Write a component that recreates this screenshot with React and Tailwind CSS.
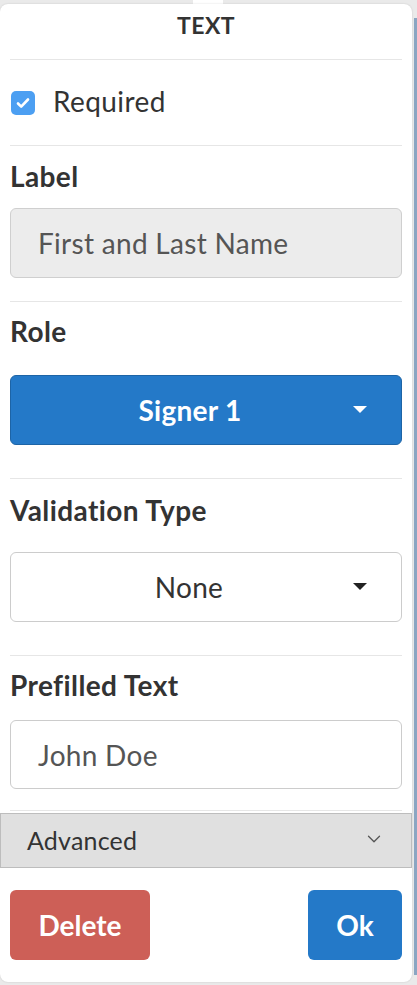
import { ChevronDown } from "lucide-react";

/* ── Section heading ── */
const Heading = ({ children }) => (
  <p className="text-[28px] font-bold text-[#333] leading-none tracking-[0.4px]">{children}</p>
);

const Rule = () => <div className="h-px shrink-0 bg-[#e6e6e6] mx-[10px]" />;

/* ── Caret for the select buttons ── */
const Caret = ({ color }) => (
  <svg width="14" height="8" viewBox="0 0 14 8" className="absolute right-[34px] top-1/2 -translate-y-1/2">
    <path d="M0 0h14L7 7z" fill={color} />
  </svg>
);

export default function App() {
  return (
    <div className="relative min-h-[985px] w-[417px] bg-[#eaeaea] pt-[4px] font-['Lato','Noto_Sans',sans-serif]">
      {/* popover arrow notch */}
      <div className="absolute left-[193px] top-0 h-[5px] w-[30px] bg-white" />
      {/* neighbouring column at the right edge */}
      <div className="absolute right-0 top-[18px] bottom-[10px] w-[3px] bg-[#8ba6c2]" />

      <div className="relative flex h-[978px] w-[412px] flex-col rounded-[8px] bg-white shadow-[0_0_2px_rgba(0,0,0,0.15)]">
        {/* ── Header ── */}
        <div className="flex h-[55px] shrink-0 justify-center pt-[10px]">
          <span className="text-[23px] font-bold text-[#333] leading-none tracking-[0.4px]">TEXT</span>
        </div>
        <Rule />

        {/* ── Required ── */}
        <div className="flex h-[85px] shrink-0 items-center gap-[18px] px-[11px]">
          <span className="flex h-[24px] w-[24px] items-center justify-center rounded-[5px] bg-[#4c9ff2]">
            <svg width="14" height="12" viewBox="0 0 14 12">
              <path d="M2 6.5l3.2 3.2L12 2.5" stroke="white" strokeWidth="2.6" fill="none" strokeLinecap="round" strokeLinejoin="round" />
            </svg>
          </span>
          <span className="-mt-[3px] text-[28px] text-[#333] leading-none tracking-[0.4px]">Required</span>
        </div>
        <Rule />

        {/* ── Label ── */}
        <div className="flex shrink-0 flex-col px-[10px] pt-[16px] pb-[23px]">
          <Heading>Label</Heading>
          <div className="mt-[18px] flex h-[70px] items-center rounded-[6px] border border-[#cfcfcf] bg-[#ececec] px-[27px]">
            <span className="text-[28px] text-[#555] tracking-[0.3px]">First and Last Name</span>
          </div>
        </div>
        <Rule />

        {/* ── Role ── */}
        <div className="flex shrink-0 flex-col px-[10px] pt-[15px] pb-[33px]">
          <Heading>Role</Heading>
          <div className="relative mt-[30px] flex h-[70px] items-center justify-center rounded-[6px] border border-[#1d64a6] bg-[#2479c8]">
            <span className="mr-[32px] text-[28px] font-bold text-white tracking-[0.3px]">Signer 1</span>
            <Caret color="white" />
          </div>
        </div>
        <Rule />

        {/* ── Validation Type ── */}
        <div className="flex shrink-0 flex-col px-[10px] pt-[17px] pb-[33px]">
          <Heading>Validation Type</Heading>
          <div className="relative mt-[28px] flex h-[70px] items-center justify-center rounded-[6px] border border-[#cccccc] bg-white">
            <span className="mr-[34px] text-[28px] text-[#333] tracking-[0.3px]">None</span>
            <Caret color="#222" />
          </div>
        </div>
        <Rule />

        {/* ── Prefilled Text ── */}
        <div className="flex shrink-0 flex-col px-[10px] pt-[15px] pb-[21px]">
          <Heading>Prefilled Text</Heading>
          <div className="mt-[21px] flex h-[69px] items-center rounded-[6px] border border-[#cccccc] bg-white px-[27px]">
            <span className="text-[28px] text-[#555] tracking-[0.3px]">John Doe</span>
          </div>
        </div>
        <Rule />

        {/* ── Advanced ── */}
        <div className="mt-[2px] flex h-[55px] shrink-0 items-center justify-between border border-[#bdbdbd] bg-[#e0e0e0] pl-[26px] pr-[26px]">
          <span className="text-[25px] text-[#333] tracking-[0.2px]">Advanced</span>
          <ChevronDown size={22} strokeWidth={1.4} className="-mt-[4px] text-[#555]" />
        </div>

        {/* ── Footer buttons ── */}
        <div className="flex items-center justify-between px-[10px] pt-[22px]">
          <button className="h-[70px] w-[140px] rounded-[6px] bg-[#cd5f57] text-[28px] font-bold text-white">Delete</button>
          <button className="h-[70px] w-[94px] rounded-[6px] bg-[#2479c8] text-[28px] font-bold text-white">Ok</button>
        </div>
      </div>
    </div>
  );
}
